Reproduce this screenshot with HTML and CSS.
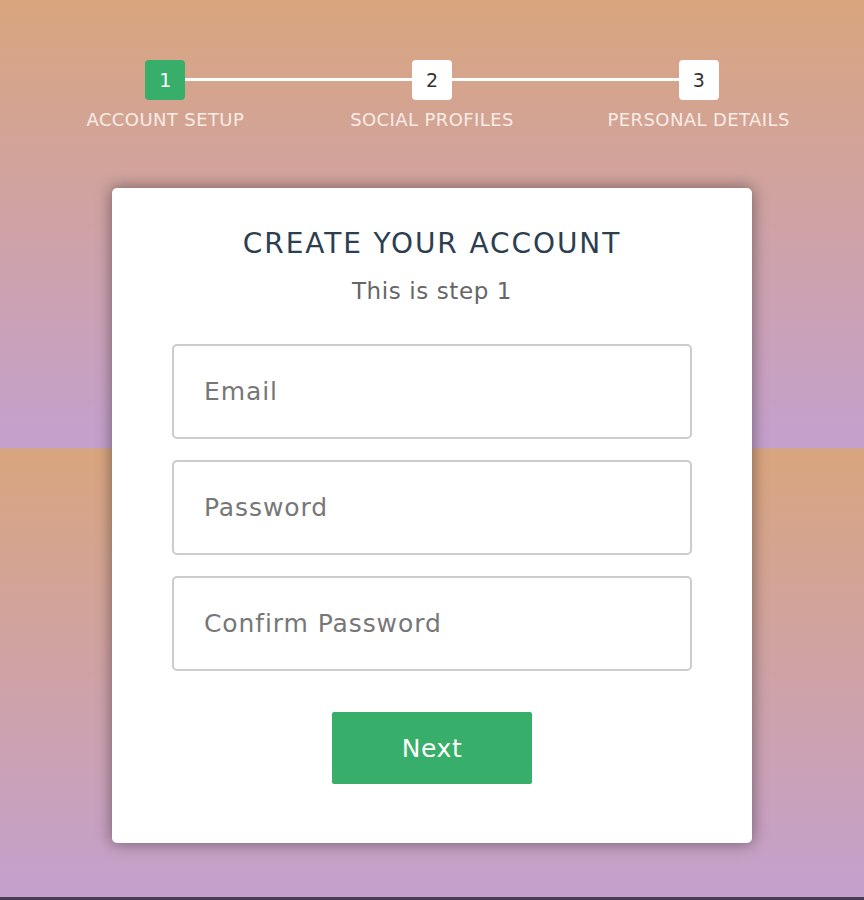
FILE: index.html
```html
<!DOCTYPE html>
<html lang="en">
<head>
    <meta charset="UTF-8">
    <title>Multi step form</title>
<link rel="stylesheet" href="styles.css">
</head>
<body>
<div class="page">
    <ul class="progress">
        <li class="step active"><span class="num">1</span><span class="label">Account Setup</span></li>
        <li class="step"><span class="num">2</span><span class="label">Social Profiles</span></li>
        <li class="step"><span class="num">3</span><span class="label">Personal Details</span></li>
    </ul>
    <form class="card">
        <h2 class="title">Create your account</h2>
        <h3 class="subtitle">This is step 1</h3>
        <input class="field" type="text" placeholder="Email">
        <input class="field" type="password" placeholder="Password">
        <input class="field" type="password" placeholder="Confirm Password">
        <button class="next" type="button">Next</button>
    </form>
</div>
</body>
</html>
```

FILE: styles.css
```css
html {
    background: linear-gradient(#d9a57e, #c4a0cd) 0 0 / 100% 448.5px repeat-y;
}
body {
    margin: 0;
    min-height: 100vh;
    box-sizing: border-box;
    border-bottom: 3px solid #463d55;
    font-family: "DejaVu Sans", "Liberation Sans", sans-serif;
}
.page {
    display: flex;
    flex-direction: column;
    align-items: center;
    padding-top: 60px;
}
.progress {
    display: flex;
    width: 800px;
    margin: 0;
    padding: 0;
    list-style: none;
}
.step {
    position: relative;
    flex: 1;
    display: flex;
    flex-direction: column;
    align-items: center;
}
.step + .step::before {
    content: "";
    position: absolute;
    left: -50%;
    right: 50%;
    top: 18px;
    height: 3px;
    background: #fff;
}
.num {
    position: relative;
    z-index: 1;
    width: 40px;
    height: 40px;
    border-radius: 4px;
    background: #fff;
    color: #333;
    font-size: 19px;
    line-height: 40px;
    text-align: center;
}
.step.active .num {
    background: #37ae6a;
    color: #fff;
}
.label {
    margin-top: 9px;
    color: #f8ece6;
    font-size: 18px;
    text-transform: uppercase;
    letter-spacing: 0.4px;
}
.card {
    display: flex;
    flex-direction: column;
    align-items: center;
    width: 640px;
    box-sizing: border-box;
    margin-top: 58px;
    padding: 39px 60px 59px;
    background: #fff;
    border-radius: 5px;
    box-shadow: 0 0 15px 1px rgba(0, 0, 0, 0.4);
}
.title {
    margin: 0;
    color: #2c3e50;
    font-size: 28px;
    font-weight: 400;
    text-transform: uppercase;
    letter-spacing: 1.9px;
}
.subtitle {
    margin: 18px 0 40px;
    color: #666;
    font-size: 23px;
    font-weight: 400;
    letter-spacing: 0.6px;
}
.field {
    width: 100%;
    height: 95px;
    box-sizing: border-box;
    margin-bottom: 21px;
    padding: 0 30px;
    border: 2px solid #ccc;
    border-radius: 5px;
    font-family: inherit;
    font-size: 25px;
    letter-spacing: 0.9px;
    color: #2c3e50;
}
.field::placeholder {
    color: #777;
}
.next {
    width: 200px;
    height: 72px;
    margin-top: 20px;
    border: 0;
    border-radius: 2px;
    background: #37ae6a;
    color: #fff;
    font-family: inherit;
    font-size: 25px;
    letter-spacing: 0.6px;
}
```
